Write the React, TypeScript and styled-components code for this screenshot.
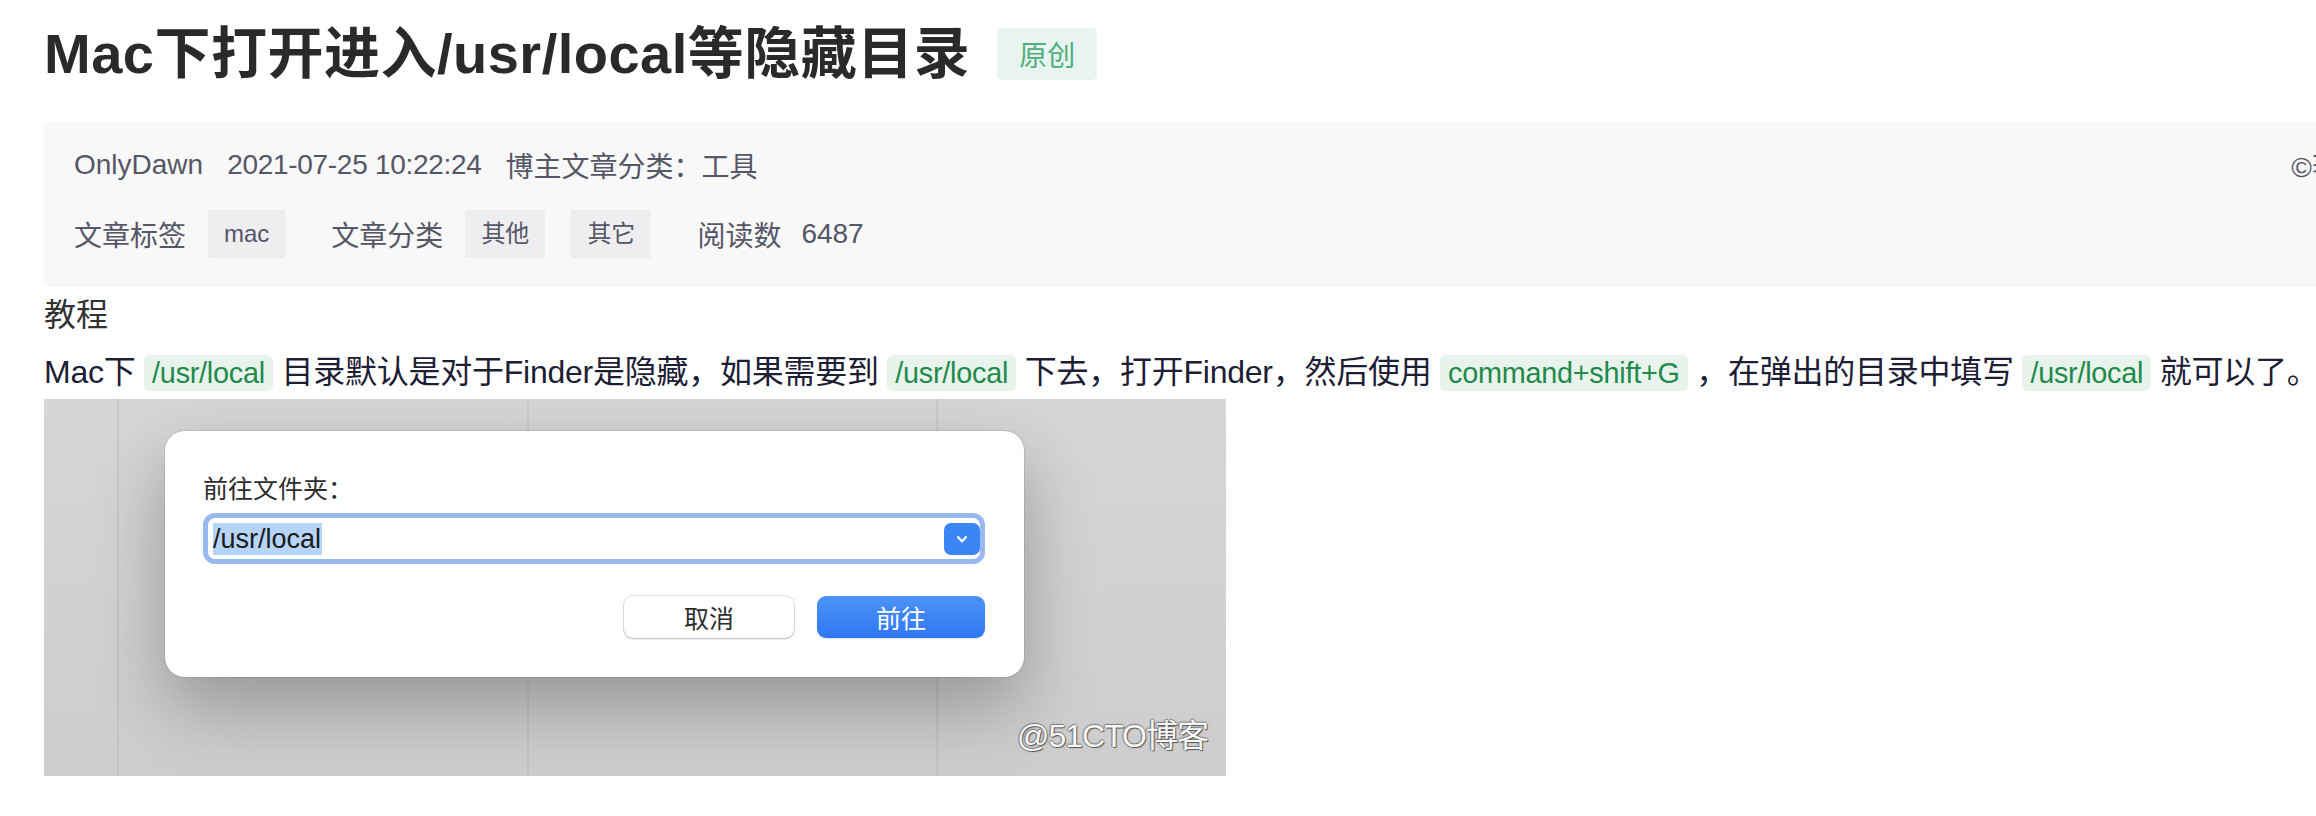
import React from 'react'
import styled, { createGlobalStyle } from 'styled-components'

const SANS = `"Liberation Sans", "Noto Sans CJK SC", sans-serif`

const GlobalStyle = createGlobalStyle`
  html, body {
    margin: 0;
    padding: 0;
    background: #fff;
    overflow: hidden;
  }
  body {
    font-family: ${SANS};
  }
`

const Page = styled.div`
  width: 2382px;
  padding: 14px 0 0 44px;
`

const TitleRow = styled.div`
  display: flex;
  align-items: center;
  height: 80px;
`

const Title = styled.h1`
  margin: 0;
  font-size: 56px;
  font-weight: 700;
  line-height: 80px;
  color: #2a2a2c;
  letter-spacing: 0.5px;
  white-space: nowrap;
`

const OriginalBadge = styled.span`
  margin-left: 27px;
  width: 100px;
  height: 52px;
  display: flex;
  align-items: center;
  justify-content: center;
  background: #e8f4ef;
  color: #4fae7f;
  border-radius: 5px;
  font-size: 28px;
`

const MetaBox = styled.div`
  margin-top: 28px;
  height: 165px;
  box-sizing: border-box;
  padding: 23px 30px 29px;
  background: #f8f8f8;
  border-radius: 4px;
  display: flex;
  flex-direction: column;
  gap: 25px;
  color: #555666;
  font-size: 28px;
`

const MetaRow = styled.div`
  display: flex;
  align-items: center;
  height: ${p => p.$tall ? 48 : 40}px;
  white-space: nowrap;
`

const MetaItem = styled.span`
  margin-right: 24px;
  letter-spacing: ${p => p.$tight ? '-0.3px' : '0'};
`

const Copyright = styled.span`
  margin-left: auto;
`

const MetaGroup = styled.div`
  display: flex;
  align-items: center;
  margin-right: 46px;
`

const TagList = styled.div`
  display: flex;
  gap: 26px;
  margin-left: 22px;
`

const Tag = styled.span`
  height: 48px;
  line-height: 48px;
  padding: 0 16px;
  background: #eeeef1;
  border-radius: 2px;
  font-size: 24px;
`

const Count = styled.span`
  margin-left: 20px;
`

const Heading = styled.p`
  margin: 4px 0 0;
  font-size: 32px;
  line-height: 48px;
  color: #333;
`

const Paragraph = styled.p`
  margin: 9px 0 0;
  font-size: 32px;
  line-height: 48px;
  color: #1d2035;
  letter-spacing: -0.25px;
  white-space: nowrap;
`

const Code = styled.code`
  display: inline-block;
  font-family: ${SANS};
  font-size: 0.9em;
  line-height: 36px;
  padding: 0 8px;
  background: #e7f3eb;
  color: #1f8a4c;
  border-radius: 6px;
`

const Shot = styled.div`
  position: relative;
  margin-top: 3px;
  width: 1182px;
  height: 377px;
  box-sizing: border-box;
  padding: 32px 0 0 121px;
  overflow: hidden;
  background:
    linear-gradient(90deg,
      transparent 0 73px, rgba(0, 0, 0, 0.05) 73px 75px,
      transparent 75px 483px, rgba(0, 0, 0, 0.05) 483px 485px,
      transparent 485px 892px, rgba(0, 0, 0, 0.05) 892px 894px,
      transparent 894px),
    linear-gradient(#d6d6d6, #cdcdcd);
`

const Dialog = styled.div`
  width: 859px;
  height: 246px;
  box-sizing: border-box;
  padding: 44px 39px 39px 38px;
  background: #fff;
  border-radius: 20px;
  box-shadow: 0 0 0 1px rgba(0, 0, 0, 0.08), 0 30px 70px rgba(0, 0, 0, 0.28);
`

const DialogLabel = styled.div`
  font-size: 25px;
  line-height: 28px;
  color: #2d2d2d;
`

const PathField = styled.div`
  margin-top: 10px;
  height: 51px;
  box-sizing: border-box;
  border: 5px solid #97b9ee;
  border-radius: 12px;
  background: #fff;
  display: flex;
  align-items: center;
  justify-content: space-between;
  padding-left: 5px;
`

const Selected = styled.span`
  background: #b5d4f8;
  font-size: 27px;
  line-height: 32px;
  color: #1a1a1a;
  padding-right: 1px;
`

const ChevronButton = styled.span`
  width: 36px;
  height: 32px;
  border-radius: 7px;
  background: #3b85f6;
  display: flex;
  align-items: center;
  justify-content: center;
`

const ButtonRow = styled.div`
  margin-top: 32px;
  display: flex;
  justify-content: flex-end;
  gap: 23px;
`

const DialogButton = styled.span`
  width: ${p => p.$primary ? 168 : 170}px;
  height: 42px;
  border-radius: 9px;
  display: flex;
  align-items: center;
  justify-content: center;
  font-size: 25px;
  color: ${p => p.$primary ? '#fff' : '#2d2d2d'};
  background: ${p => p.$primary ? 'linear-gradient(#4c92f4, #2f77f5)' : '#fff'};
  box-shadow: ${p => p.$primary
    ? '0 1px 1px rgba(0, 0, 0, 0.12)'
    : '0 0 0 1px rgba(0, 0, 0, 0.1), 0 1px 2px rgba(0, 0, 0, 0.22)'};
`

const Watermark = styled.span`
  position: absolute;
  right: 18px;
  bottom: 20px;
  font-size: 32px;
  color: #f7f7f7;
  letter-spacing: -1px;
  text-shadow: 1px 1px 1px #555, -1px 0 1px #777, 0 -1px 1px #777;
`

const paths = '/usr/local'

export default function App(){
  return (
    <>
      <GlobalStyle />
      <Page>
        <TitleRow>
          <Title>Mac下打开进入/usr/local等隐藏目录</Title>
          <OriginalBadge>原创</OriginalBadge>
        </TitleRow>

        <MetaBox>
          <MetaRow>
            <MetaItem>OnlyDawn</MetaItem>
            <MetaItem $tight>2021-07-25 10:22:24</MetaItem>
            <MetaItem>博主文章分类：工具</MetaItem>
            <Copyright>©著作权</Copyright>
          </MetaRow>

          <MetaRow $tall>
            <MetaGroup>
              文章标签
              <TagList><Tag>mac</Tag></TagList>
            </MetaGroup>
            <MetaGroup>
              文章分类
              <TagList>
                <Tag>其他</Tag>
                <Tag>其它</Tag>
              </TagList>
            </MetaGroup>
            <MetaGroup>
              阅读数
              <Count>6487</Count>
            </MetaGroup>
          </MetaRow>
        </MetaBox>

        <Heading>教程</Heading>
        <Paragraph>
          Mac下 <Code>{paths}</Code> 目录默认是对于Finder是隐藏，如果需要到 <Code>{paths}</Code> 下去，打开Finder，然后使用 <Code>command+shift+G</Code> ，在弹出的目录中填写 <Code>{paths}</Code> 就可以了。
        </Paragraph>

        <Shot>
          <Dialog>
            <DialogLabel>前往文件夹：</DialogLabel>
            <PathField>
              <Selected>/usr/local</Selected>
              <ChevronButton>
                <svg width="16" height="16" viewBox="0 0 16 16">
                  <path d="M4 6 L8 10.5 L12 6" fill="none" stroke="#fff" strokeWidth="2" strokeLinecap="round" strokeLinejoin="round" />
                </svg>
              </ChevronButton>
            </PathField>
            <ButtonRow>
              <DialogButton>取消</DialogButton>
              <DialogButton $primary>前往</DialogButton>
            </ButtonRow>
          </Dialog>
          <Watermark>@51CTO博客</Watermark>
        </Shot>
      </Page>
    </>
  )
}
